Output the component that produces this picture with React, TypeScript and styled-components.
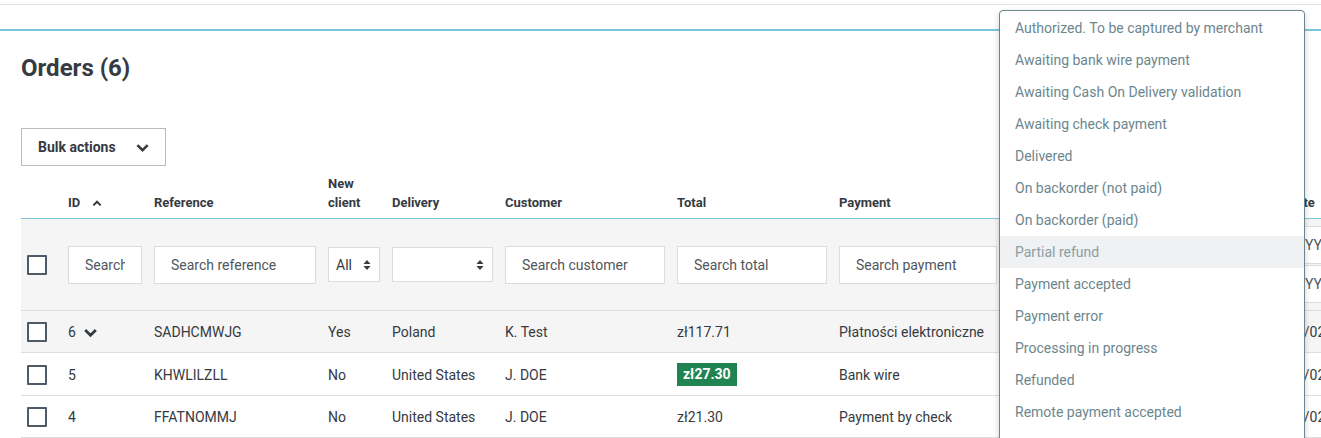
import React from "react";
import styled, { createGlobalStyle } from "styled-components";

const GlobalStyle = createGlobalStyle`
  html, body {
    margin: 0;
    padding: 0;
    background: #ffffff;
  }
  body {
    font-family: Roboto, "Noto Sans", "Liberation Sans", sans-serif;
    color: #363a41;
    overflow: hidden;
  }
  * {
    box-sizing: border-box;
  }
`;

const Page = styled.div`
  position: relative;
  width: 1321px;
  height: 438px;
  overflow: hidden;
`;

const TopStrip = styled.div`
  height: 5px;
  border-bottom: 1px solid #e1e1e1;
`;

const Card = styled.section`
  margin-top: 24px;
  border-top: 2px solid #7cc6dc;
  padding: 21px 0 0 21px;
`;

const Title = styled.h1`
  margin: 0;
  font-size: 24px;
  line-height: 32px;
  font-weight: 700;
  color: #363a41;
`;

const Toolbar = styled.div`
  margin-top: 44px;
  display: flex;
`;

const BulkButton = styled.button`
  display: flex;
  align-items: center;
  justify-content: space-between;
  width: 145px;
  height: 38px;
  padding: 0 16px 0 16px;
  border: 1px solid #bbbbbb;
  background: #ffffff;
  font-family: inherit;
  font-size: 14px;
  font-weight: 700;
  color: #363a41;
`;

const Table = styled.table`
  margin-top: 8px;
  table-layout: fixed;
  border-collapse: collapse;
  width: 1411px;
`;

const Th = styled.th`
  text-align: left;
  vertical-align: bottom;
  padding: 0 6px 6px;
  font-size: 13px;
  line-height: 19px;
  font-weight: 700;
  color: #363a41;
  border-bottom: 1px solid #7cc6dc;
`;

const SortHead = styled.span`
  display: inline-flex;
  align-items: center;
  gap: 12px;
`;

const FilterCell = styled.td`
  background: #f5f5f5;
  padding: 7px 6px;
  vertical-align: middle;
  border-bottom: 1px solid #dddddd;
`;

const Cell = styled.td<{ $shaded?: boolean }>`
  padding: 11px 6px 10px;
  font-size: 14px;
  line-height: 20px;
  color: #363a41;
  white-space: nowrap;
  overflow: hidden;
  border-bottom: 1px solid #dddddd;
  background: ${(p) => (p.$shaded ? "#f5f5f5" : "#ffffff")};
`;

const Check = styled.span`
  display: block;
  width: 20px;
  height: 20px;
  border: 2px solid #4e5a66;
  border-radius: 1px;
  background: #ffffff;
`;

const SearchInput = styled.input`
  display: block;
  width: 100%;
  height: 38px;
  padding: 0 16px;
  border: 1px solid #dcdcdc;
  background: #ffffff;
  font-family: inherit;
  font-size: 14px;
  color: #363a41;
  outline: none;
  &::placeholder {
    color: #50565c;
  }
`;

const DateStack = styled.div`
  display: flex;
  flex-direction: column;
  gap: 1px;
`;

const SelectBox = styled.div`
  display: flex;
  align-items: center;
  justify-content: space-between;
  height: 35px;
  padding: 0 8px 0 7px;
  border: 1px solid #dcdcdc;
  background: #ffffff;
  font-size: 14px;
  color: #363a41;
`;

const IdWrap = styled.span`
  display: inline-flex;
  align-items: center;
  gap: 8px;
`;

const Badge = styled.span`
  display: inline-block;
  margin: -2px 0 -1px;
  padding: 0 6px;
  line-height: 23px;
  background: #1f8451;
  color: #ffffff;
  font-weight: 700;
`;

const Dropdown = styled.ul`
  position: absolute;
  left: 999px;
  top: 10px;
  width: 306px;
  height: 460px;
  margin: 0;
  padding: 1px 0 0;
  list-style: none;
  background: #ffffff;
  border: 1px solid #6c868e;
  border-radius: 4px 4px 0 0;
  box-shadow: 0 2px 6px rgba(0, 0, 0, 0.18);
`;

const Option = styled.li<{ $active?: boolean }>`
  height: 32px;
  line-height: 32px;
  padding: 0 15px;
  font-size: 14px;
  white-space: nowrap;
  color: ${(p) => (p.$active ? "#8c9ea4" : "#6c868e")};
  background: ${(p) => (p.$active ? "#eff1f2" : "transparent")};
`;

const Chevron = ({ up = false, size = 12, stroke = 2.6 }: { up?: boolean; size?: number; stroke?: number }) => (
  <svg width={size} height={size} viewBox="0 0 12 12" fill="none">
    <polyline
      points={up ? "2.5,8 6,4.5 9.5,8" : "2,4.5 6,8.5 10,4.5"}
      stroke="#363a41"
      strokeWidth={stroke}
      strokeLinecap="square"
    />
  </svg>
);

const SortArrows = () => (
  <svg width="8" height="12" viewBox="0 0 8 12">
    <polygon points="4,1 7.5,5 0.5,5" fill="#363a41" />
    <polygon points="4,11 7.5,7 0.5,7" fill="#363a41" />
  </svg>
);

const statuses = [
  "Authorized. To be captured by merchant",
  "Awaiting bank wire payment",
  "Awaiting Cash On Delivery validation",
  "Awaiting check payment",
  "Delivered",
  "On backorder (not paid)",
  "On backorder (paid)",
  "Partial refund",
  "Payment accepted",
  "Payment error",
  "Processing in progress",
  "Refunded",
  "Remote payment accepted",
  "Shipped",
];

const orders = [
  { id: 6, ref: "SADHCMWJG", isNew: "Yes", country: "Poland", customer: "K. Test", total: "zł117.71", payment: "Płatności elektroniczne", date: "08/02/2024", badge: false, expand: true },
  { id: 5, ref: "KHWLILZLL", isNew: "No", country: "United States", customer: "J. DOE", total: "zł27.30", payment: "Bank wire", date: "01/02/2024", badge: true, expand: false },
  { id: 4, ref: "FFATNOMMJ", isNew: "No", country: "United States", customer: "J. DOE", total: "zł21.30", payment: "Payment by check", date: "01/02/2024", badge: false, expand: false },
];

const widths = [41, 86, 174, 64, 113, 172, 162, 170, 279, 150];

export default function App() {
  return (
    <Page>
      <GlobalStyle />
      <TopStrip />
      <Card>
        <Title>Orders (6)</Title>
        <Toolbar>
          <BulkButton>
            Bulk actions
            <Chevron size={13} stroke={2.2} />
          </BulkButton>
        </Toolbar>
        <Table>
          <colgroup>
            {widths.map((w, i) => (
              <col key={i} style={{ width: w }} />
            ))}
          </colgroup>
          <thead>
            <tr>
              <Th />
              <Th>
                <SortHead>
                  ID <Chevron up size={10} stroke={2.4} />
                </SortHead>
              </Th>
              <Th>Reference</Th>
              <Th>New client</Th>
              <Th>Delivery</Th>
              <Th>Customer</Th>
              <Th>Total</Th>
              <Th>Payment</Th>
              <Th>Status</Th>
              <Th>Date</Th>
            </tr>
            <tr>
              <FilterCell>
                <Check />
              </FilterCell>
              <FilterCell>
                <SearchInput placeholder="Search ID" />
              </FilterCell>
              <FilterCell>
                <SearchInput placeholder="Search reference" />
              </FilterCell>
              <FilterCell>
                <SelectBox>
                  All <SortArrows />
                </SelectBox>
              </FilterCell>
              <FilterCell>
                <SelectBox>
                  <span />
                  <SortArrows />
                </SelectBox>
              </FilterCell>
              <FilterCell>
                <SearchInput placeholder="Search customer" />
              </FilterCell>
              <FilterCell>
                <SearchInput placeholder="Search total" />
              </FilterCell>
              <FilterCell>
                <SearchInput placeholder="Search payment" />
              </FilterCell>
              <FilterCell>
                <SelectBox>
                  <span />
                  <SortArrows />
                </SelectBox>
              </FilterCell>
              <FilterCell>
                <DateStack>
                  <SearchInput placeholder="YYYY-MM-DD" />
                  <SearchInput placeholder="YYYY-MM-DD" />
                </DateStack>
              </FilterCell>
            </tr>
          </thead>
          <tbody>
            {orders.map((o, i) => (
              <tr key={o.id}>
                <Cell $shaded={i === 0}>
                  <Check />
                </Cell>
                <Cell $shaded={i === 0}>
                  <IdWrap>
                    {o.id}
                    {o.expand && <Chevron size={13} stroke={2.6} />}
                  </IdWrap>
                </Cell>
                <Cell $shaded={i === 0}>{o.ref}</Cell>
                <Cell $shaded={i === 0}>{o.isNew}</Cell>
                <Cell $shaded={i === 0}>{o.country}</Cell>
                <Cell $shaded={i === 0}>{o.customer}</Cell>
                <Cell $shaded={i === 0}>{o.badge ? <Badge>{o.total}</Badge> : o.total}</Cell>
                <Cell $shaded={i === 0}>{o.payment}</Cell>
                <Cell $shaded={i === 0}>Payment accepted</Cell>
                <Cell $shaded={i === 0}>{o.date}</Cell>
              </tr>
            ))}
          </tbody>
        </Table>
      </Card>
      <Dropdown>
        {statuses.map((s) => (
          <Option key={s} $active={s === "Partial refund"}>
            {s}
          </Option>
        ))}
      </Dropdown>
    </Page>
  );
}
